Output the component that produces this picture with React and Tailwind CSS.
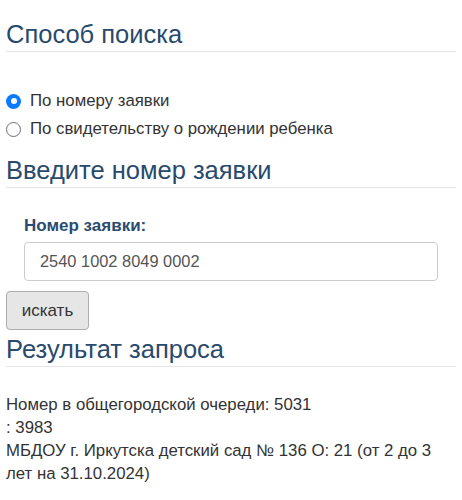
import React from 'react'

function Heading({ children, className = '' }) {
    return (
        <h2 className={`text-[25.5px] leading-[28px] font-normal text-[#284a6c] pb-[3px] border-b border-[#e5e5e5] ${className}`}>
            {children}
        </h2>
    )
}

function Radio({ checked, label }) {
    return (
        <label className="flex items-center h-[28px] gap-[9px] text-[16.8px] text-[#333]">
            {checked ? (
                <span className="w-[15px] h-[15px] rounded-full bg-[#0a7bff] flex items-center justify-center">
                    <span className="w-[6px] h-[6px] rounded-full bg-white" />
                </span>
            ) : (
                <span className="w-[15px] h-[15px] rounded-full border-[1.5px] border-[#6f6f6f] bg-white" />
            )}
            <span>{label}</span>
        </label>
    )
}

export default function App() {
    return (
        <div className="px-[6px] pt-[20px] bg-white min-h-[500px]" style={{ fontFamily: '"Liberation Sans", Arial, sans-serif' }}>
            <Heading>Способ поиска</Heading>

            <div className="mt-[35px]">
                <Radio checked label="По номеру заявки" />
                <Radio label="По свидетельству о рождении ребенка" />
            </div>

            <Heading className="mt-[13px]">Введите номер заявки</Heading>

            <div className="px-[18px] mt-[28px]">
                <div className="text-[17px] leading-[20px] font-bold text-[#2b4c6f]">Номер заявки:</div>
                <div className="mt-[6px] h-[39px] border border-[#cccccc] rounded-[4px] px-[15px] flex items-center text-[16.4px] text-[#555]">
                    2540 1002 8049 0002
                </div>
            </div>

            <button className="mt-[10px] h-[39px] w-[83px] bg-[#e6e6e6] border border-[#adadad] rounded-[4px] text-[17px] text-[#333]">
                искать
            </button>

            <Heading className="mt-[5px]">Результат запроса</Heading>

            <div className="mt-[26px] text-[16.8px] leading-[23px] text-[#333]">
                Номер в общегородской очереди: 5031
                <br />
                : 3983
                <br />
                МБДОУ г. Иркутска детский сад № 136 О: 21 (от 2 до 3 лет на 31.10.2024)
            </div>
        </div>
    )
}
